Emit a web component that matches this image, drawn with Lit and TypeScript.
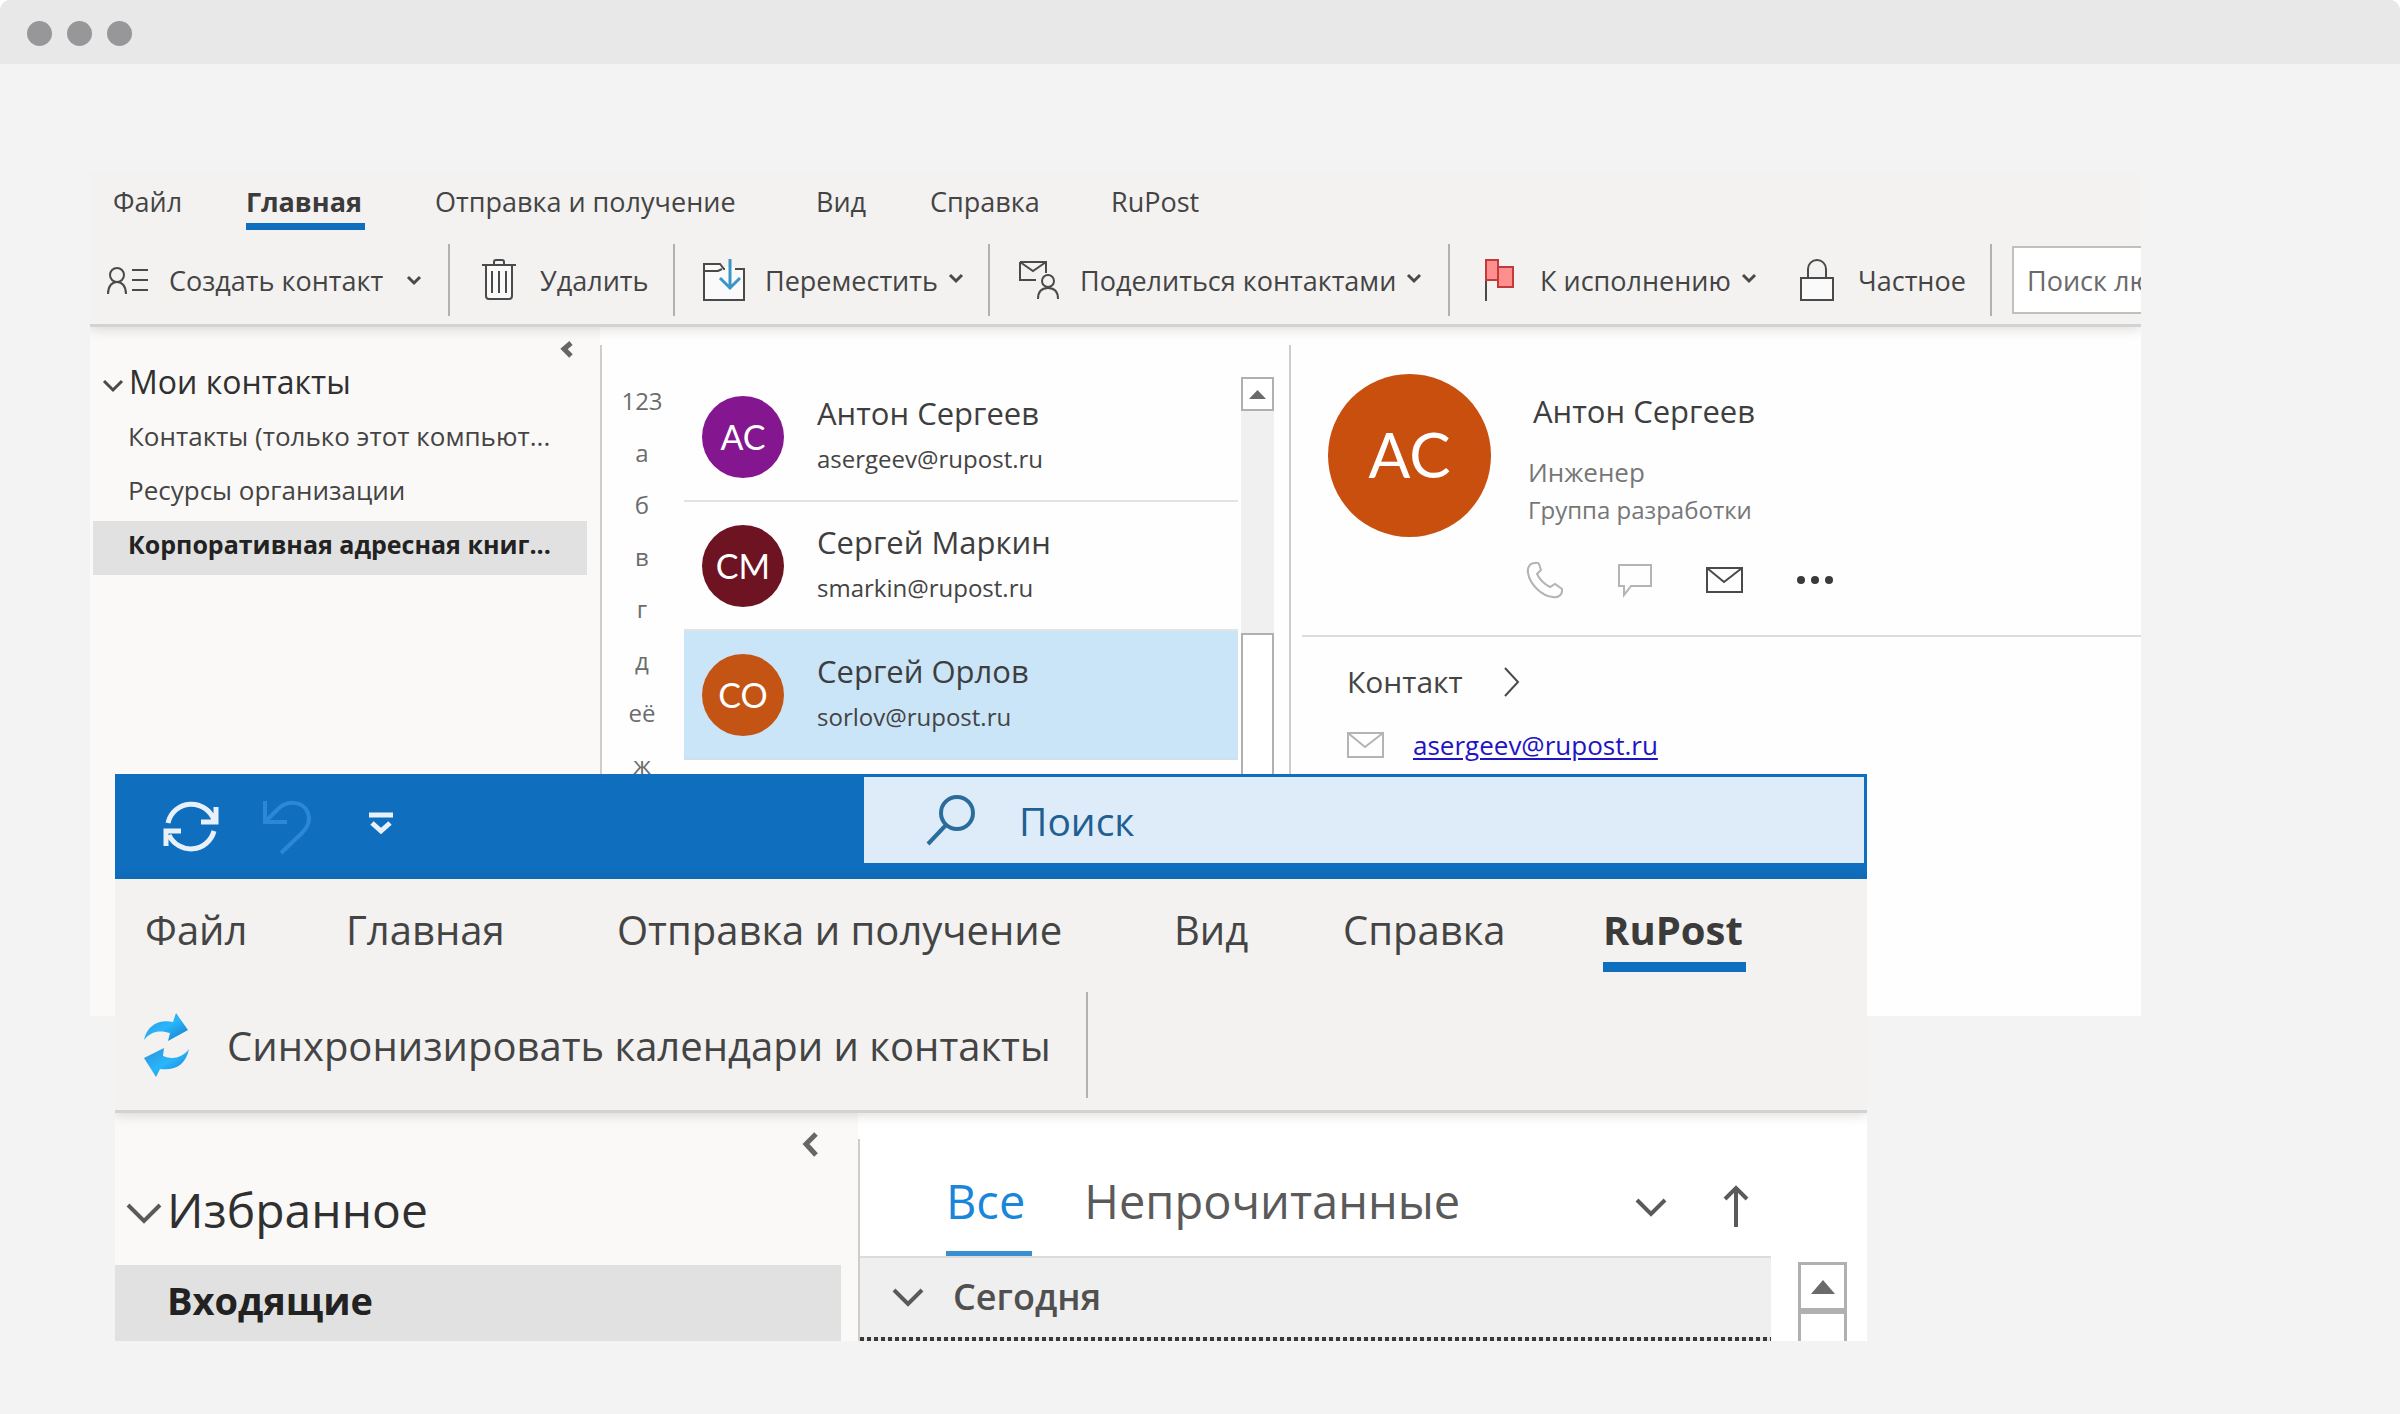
import { LitElement, html, css, svg, nothing } from "lit";
import type { TemplateResult } from "lit";
import { customElement, state } from "lit/decorators.js";
import { classMap } from "lit/directives/class-map.js";

interface Contact {
  initials: string;
  name: string;
  email: string;
  tone: string;
}

const TABS = ["Файл", "Главная", "Отправка и получение", "Вид", "Справка", "RuPost"];
const FOLDERS = [
  "Контакты (только этот компьют...",
  "Ресурсы организации",
  "Корпоративная адресная книг...",
];
const LETTERS = ["123", "а", "б", "в", "г", "д", "её", "ж"];
const CONTACTS: Contact[] = [
  { initials: "АС", name: "Антон Сергеев", email: "asergeev@rupost.ru", tone: "violet" },
  { initials: "СМ", name: "Сергей Маркин", email: "smarkin@rupost.ru", tone: "wine" },
  { initials: "СО", name: "Сергей Орлов", email: "sorlov@rupost.ru", tone: "orange" },
];

const icon = (w: number, h: number, body: unknown, cls = "") =>
  html`<svg class="icon ${cls}" width=${w} height=${h} viewBox="0 0 ${w} ${h}" aria-hidden="true">${body}</svg>`;

const envelope = svg`<path d="M1 1H36V25H1ZM1 1L18 15L36 1" />`;
const caret = icon(14, 9, svg`<path d="M1 1L7 7L13 1" />`, "caret");
const triangle = (w: number, h: number) =>
  icon(w, h, svg`<path class="solid" d="M0 ${h}L${w / 2} 0L${w} ${h}Z" />`);

const ICONS = {
  newContact: icon(42, 27, svg`<circle cx="10" cy="8" r="7" /><path d="M1 27C1 19 5 15 10 15S19 19 19 27M25 3H41M25 13H41M25 23H41" />`),
  trash: icon(34, 42, svg`<path class="paper" d="M4 6H30V37Q30 40 27 40H7Q4 40 4 37Z" /><path d="M0 6H34M12 6V3Q12 1 14 1H20Q22 1 22 3V6M10 12V34M17 12V34M24 12V34" />`),
  folder: icon(42, 42, svg`<path class="paper" d="M1 5H17L21 10H41V41H1Z" /><path d="M1 12H15L19 10" /><path class="gap" d="M22 10H32" /><path class="blue" d="M27 0V29M17 19L27 29L37 19" />`),
  share: icon(40, 40, svg`<path d="M1 2H27V13M1 2V20H17M1 2L14 11L27 2" /><circle cx="29" cy="21" r="6" /><path d="M19 39C19 31 23 28 29 28S39 31 39 39" />`),
  flag: icon(30, 42, svg`<path d="M2 2V42" /><path class="red" d="M14 8H29V28H14V21H2V1H14Z" /><path class="red" d="M14 8V21" />`),
  lock: icon(34, 42, svg`<path class="paper" d="M1 19H33V41H1Z" /><path d="M8 19V10A9 9 0 0 1 26 10V19" />`),
  phone: icon(38, 38, svg`<path d="M9 2C4 2 1 6 2 12C4 23 15 35 27 36C32 37 36 34 36 30V28L29 23L24 26C18 23 13 17 11 13L15 9L13 3Q12 1 9 2Z" />`, "pale"),
  chat: icon(34, 34, svg`<path d="M1 2H33V23H13L6 32V23H1Z" />`, "pale"),
  mail: icon(38, 27, envelope),
  mailPale: icon(38, 27, envelope, "pale"),
  dots: icon(36, 8, svg`<circle class="ink" cx="4" cy="4" r="4" /><circle class="ink" cx="18" cy="4" r="4" /><circle class="ink" cx="32" cy="4" r="4" />`),
  right: icon(18, 30, svg`<path d="M2 1L15 15L2 29" />`),
  fold: icon(12, 17, svg`<path class="thick" d="M10 2L3 8L10 15" />`),
  foldLarge: icon(18, 25, svg`<path class="thick" d="M15 2L5 12L15 23" />`),
  open: icon(20, 13, svg`<path class="bold" d="M1 2L10 11L19 2" />`),
  openLarge: icon(36, 22, svg`<path class="mid" d="M2 2L18 18L34 2" />`),
  openMid: icon(32, 20, svg`<path class="mid" d="M2 3L16 17L30 3" />`),
  up: icon(26, 42, svg`<path class="mid" d="M13 41V3M2 13L13 2L24 13" />`),
  sync: icon(54, 54, svg`<path d="M4 23A24 24 0 0 1 50 20M52 7V22H37M50 31A24 24 0 0 1 5 35M2 46V31H17" />`, "white"),
  undo: icon(48, 54, svg`<path d="M2 1V22H24M3 21L14 10C23 0 40 0 45 13C48 21 44 28 39 33L18 53" />`, "faded"),
  more: icon(24, 22, svg`<path d="M0 3H24M3 11L12 19L21 11" />`, "white"),
  search: icon(50, 52, svg`<circle cx="31" cy="19" r="16" /><path d="M20 31L2 50" />`, "navy"),
  refresh: icon(46, 64, svg`
    <defs><linearGradient id="sky" x1="0" y1="0" x2="1" y2="1"><stop offset="0" stop-color="#2b8fd8" /><stop offset=".5" stop-color="#29b6fb" /><stop offset="1" stop-color="#1478c8" /></linearGradient></defs>
    <path class="sky" d="M0 27C3 13 14 6 29 9L32 0L44 17L24 28L26 20C16 17 7 18 0 27Z" />
    <path class="sky" d="M45 36C42 51 32 58 16 56L12 64L0 45L20 35L19 43C28 47 38 45 45 36Z" />`),
};

const base = css`
  :host { display: block; font-family: "Open Sans", "Noto Sans", sans-serif; color: #444; }
  *, *::before, *::after { box-sizing: border-box; }
  button, input { font: inherit; color: inherit; background: none; border: 0; padding: 0; margin: 0; }
  button { display: flex; align-items: center; white-space: nowrap; text-align: left; cursor: pointer; }
  h1, h2, h3, p, ul { margin: 0; padding: 0; font-weight: 400; list-style: none; }
  .icon { display: block; flex: none; overflow: visible; fill: none; stroke: #4a4a4a; stroke-width: 2; }
  .icon .paper { fill: #fafafa; }
  .icon .solid { fill: #6a6a6a; stroke: none; }
  .icon .ink { fill: #3a3a3a; stroke: none; }
  .icon .gap { stroke: #fafafa; stroke-width: 4; }
  .icon .blue { stroke: #3a96c8; stroke-width: 3; }
  .icon .red { fill: #ff8f8f; stroke: #c23b3b; }
  .icon .sky { fill: url(#sky); stroke: none; }
  .icon .bold { stroke-width: 3; }
  .icon .thick { stroke: #666; stroke-width: 5; }
  .icon .mid { stroke-width: 4; stroke: #5a5a5a; }
  .icon.caret { stroke-width: 3; }
  .icon.pale { stroke: #b4b4b4; }
  .icon.white { stroke: #e8f1fa; stroke-width: 5; }
  .icon.faded { stroke: #2b88d8; stroke-width: 4; }
  .icon.navy { stroke: #2a6c9c; stroke-width: 4; }
  .ribbon { position: relative; z-index: 1; background: #f3f2f0; border-bottom: 3px solid #d4d2d0; box-shadow: 0 2px 12px rgba(0, 0, 0, 0.14); }
  .tabs { display: grid; justify-items: start; }
  .tab { border-bottom: solid transparent; }
  .tab.active { font-weight: 700; border-color: #106ebe; color: #3b3b3b; padding-right: 3px; }
  .rule { align-self: stretch; width: 2px; background: #b3b1af; }
  .scroll { display: flex; flex-direction: column; background: #f0f0f0; }
  .scroll-up { justify-content: center; border: 2px solid #b0b0b0; background: #fff; }
  .thumb { flex: 1; border: 2px solid #b0b0b0; border-bottom: 0; background: #fff; }
`;

@customElement("contacts-window")
class ContactsWindow extends LitElement {
  @state() private selected = 2;

  static styles = [base, css`
    .window { overflow: hidden; background: #fefefe; font-size: 27px; }
    .tabs { grid-template-columns: 133px 189px 381px 114px 181px auto; padding: 11px 0 0 23px; }
    .tab { line-height: 38px; padding-bottom: 2px; border-bottom-width: 7px; }
    .tools { display: grid; grid-template-columns: 360px 225px 315px 460px 318px 224px 1fr; height: 94px; padding: 14px 0 8px; }
    .tool { display: flex; align-items: stretch; justify-content: space-between; }
    .tool button { gap: 20px; padding-left: 28px; }
    .tool:first-child button { padding-left: 17px; }
    .slot { display: flex; justify-content: center; width: 42px; }
    .tool .caret { margin-left: -9px; margin-bottom: 4px; }
    .tool:first-child .caret { margin-left: 4px; margin-bottom: 0; }
    .find { margin: 2px 0 2px 20px; width: 320px; border: 2px solid #c2c0be; background: #fff; padding-left: 13px; }
    .find::placeholder { color: #6a6a6a; opacity: 1; }
    .body { display: grid; grid-template-columns: 510px 689px 1fr; min-height: 689px; }
    .side { background: #faf9f8; padding-top: 14px; }
    .collapse { margin-left: 471px; height: 17px; margin-bottom: 2px; }
    .side h2 { display: flex; align-items: center; gap: 6px; padding-left: 13px; font-size: 32px; line-height: 44px; color: #303030; margin-bottom: 9px; }
    .side h2 .icon { margin-top: 6px; }
    .folder { width: 494px; height: 54px; margin-left: 3px; padding: 0 0 8px 35px; font-size: 26px; line-height: 46px; }
    .folder.active { background: #e1e1e1; font-weight: 700; font-size: 25px; color: #222; }
    .people { display: grid; grid-template-columns: 82px 1fr 33px; margin-top: 18px; border-left: 2px solid #cfcdcb; padding-right: 15px; }
    .index { padding-top: 30px; }
    .index button { width: 80px; justify-content: center; font-size: 24px; line-height: 52px; color: #6c6c6c; }
    .cards { padding-top: 28px; margin-right: 3px; }
    .card { width: 100%; height: 129px; gap: 33px; padding-left: 18px; border-bottom: 2px solid #e3e3e3; }
    .card.active { background: #cae4f8; border-color: #d0dfec; }
    .avatar { display: grid; place-items: center; flex: none; width: 82px; height: 82px; border-radius: 50%; color: #fff; font: 34px/1 Lato, sans-serif; }
    .violet { background: #84168f; }
    .wine { background: #6d1322; }
    .orange { background: #c45414; }
    .name { display: block; font-size: 31px; line-height: 44px; color: #3e3e3e; }
    .email { display: block; font-size: 24px; line-height: 47px; color: #444; }
    .scroll { margin-top: 32px; }
    .scroll-up { height: 34px; }
    .thumb { margin-top: 222px; }
    .detail { margin-top: 18px; border-left: 2px solid #cfcdcb; }
    .head { display: flex; gap: 34px; padding: 29px 0 0 37px; }
    .avatar.big { width: 163px; height: 163px; padding-bottom: 4px; font-size: 62px; background: #c94f0f; }
    .who { padding-top: 15px; }
    .who .name { padding-left: 8px; margin-bottom: 20px; }
    .who p { padding-left: 3px; line-height: 38px; color: #777; font-size: 24px; }
    .who p.role { font-size: 26px; }
    .actions { display: flex; gap: 50px; margin-top: 31px; }
    .actions button { width: 40px; height: 40px; justify-content: center; }
    .section { margin: 35px 0 0 11px; border-top: 2px solid #dcdcdc; padding: 23px 0 0 45px; }
    .section h3 { display: flex; align-items: center; gap: 40px; font-size: 30px; line-height: 44px; }
    .mailto { display: flex; align-items: center; gap: 28px; margin-top: 21px; font-size: 26px; line-height: 40px; }
    .mailto a { color: #1f14c4; text-underline-offset: 3px; text-decoration-thickness: 2px; }
  `];

  private tool(glyph: TemplateResult, label: string, menu: boolean, ruled = true) {
    return html`<div class="tool">
      <button type="button"><span class="slot">${glyph}</span>${label}${menu ? caret : nothing}</button>
      ${ruled ? html`<span class="rule"></span>` : nothing}
    </div>`;
  }

  render() {
    return html`<section class="window">
      <header class="ribbon">
        <nav class="tabs">
          ${TABS.map((t, i) => html`<button type="button" class=${classMap({ tab: true, active: i === 1 })}>${t}</button>`)}
        </nav>
        <div class="tools">
          ${this.tool(ICONS.newContact, "Создать контакт", true)}
          ${this.tool(ICONS.trash, "Удалить", false)}
          ${this.tool(ICONS.folder, "Переместить", true)}
          ${this.tool(ICONS.share, "Поделиться контактами", true)}
          ${this.tool(ICONS.flag, "К исполнению", true, false)}
          ${this.tool(ICONS.lock, "Частное", false)}
          <input class="find" type="text" placeholder="Поиск людей" aria-label="Поиск людей" />
        </div>
      </header>
      <div class="body">
        <aside class="side">
          <button type="button" class="collapse" aria-label="Свернуть">${ICONS.fold}</button>
          <h2>${ICONS.open}Мои контакты</h2>
          ${FOLDERS.map((f, i) => html`<button type="button" class=${classMap({ folder: true, active: i === 2 })}>${f}</button>`)}
        </aside>
        <div class="people">
          <nav class="index">${LETTERS.map((l) => html`<button type="button">${l}</button>`)}</nav>
          <ul class="cards">
            ${CONTACTS.map((c, i) => html`<li>
              <button type="button" class=${classMap({ card: true, active: i === this.selected })} @click=${() => (this.selected = i)}>
                <span class="avatar ${c.tone}">${c.initials}</span>
                <span><span class="name">${c.name}</span><span class="email">${c.email}</span></span>
              </button>
            </li>`)}
          </ul>
          <div class="scroll">
            <button type="button" class="scroll-up" aria-label="Вверх">${triangle(17, 9)}</button>
            <span class="thumb"></span>
          </div>
        </div>
        <article class="detail">
          <div class="head">
            <span class="avatar big">АС</span>
            <div class="who">
              <h2 class="name">Антон Сергеев</h2>
              <p class="role">Инженер</p>
              <p>Группа разработки</p>
              <div class="actions">
                <button type="button" aria-label="Позвонить">${ICONS.phone}</button>
                <button type="button" aria-label="Чат">${ICONS.chat}</button>
                <button type="button" aria-label="Написать">${ICONS.mail}</button>
                <button type="button" aria-label="Ещё">${ICONS.dots}</button>
              </div>
            </div>
          </div>
          <div class="section">
            <h3>Контакт ${ICONS.right}</h3>
            <p class="mailto">${ICONS.mailPale}<a href="mailto:asergeev@rupost.ru">asergeev@rupost.ru</a></p>
          </div>
        </article>
      </div>
    </section>`;
  }
}

@customElement("mail-window")
class MailWindow extends LitElement {
  static styles = [base, css`
    .window { overflow: hidden; background: #fff; font-size: 40px; }
    .title { display: grid; grid-template-columns: 749px 1fr; height: 105px; background: #106ebe; padding: 3px 3px 16px 0; }
    .quick { display: flex; align-items: center; padding: 13px 0 0 49px; }
    .quick button + button { margin-left: 45px; }
    .quick button:last-child { margin-left: 58px; padding-bottom: 8px; }
    .search { display: flex; align-items: center; gap: 43px; padding-left: 62px; background: #deecf9; color: #1f5f92; }
    .search input { flex: 1; min-width: 0; height: 100%; font-size: 39px; }
    .search input::placeholder { color: #1f5f92; opacity: 1; }
    .tabs { grid-template-columns: 201px 271px 557px 169px 260px auto; padding: 23px 0 0 30px; }
    .tab { line-height: 56px; padding-bottom: 4px; border-bottom-width: 10px; }
    .tools { display: flex; justify-content: flex-start; gap: 35px; height: 138px; padding: 20px 0 12px 29px; }
    .tools button { gap: 37px; }
    .body { display: grid; grid-template-columns: 743px 1fr; }
    .side { background: #faf9f8; padding-top: 19px; }
    .collapse { margin-left: 686px; height: 25px; }
    .side h2 { display: flex; align-items: center; gap: 5px; padding: 21px 0 23px 11px; font-size: 48px; line-height: 64px; color: #303030; }
    .side h2 .icon { margin-top: 8px; }
    .inbox { width: 726px; height: 76px; padding: 0 0 5px 52px; background: #e1e1e1; font-size: 38px; line-height: 71px; font-weight: 700; color: #222; }
    .main { display: grid; grid-template-columns: 1fr 49px; gap: 27px; margin-top: 26px; padding-right: 20px; border-left: 2px solid #cfcdcb; }
    .filter { display: flex; align-items: center; height: 119px; padding: 30px 22px 0 86px; border-bottom: 2px solid #dcdcdc; font-size: 47px; }
    .filter button { flex: none; }
    .view { align-self: stretch; line-height: 64px; padding: 0 7px 18px 0; border-bottom: 5px solid transparent; color: #5a5a5a; }
    .view.active { color: #1a86d9; border-color: #3a8fd0; }
    .view + .view { margin-left: 52px; }
    .sort { display: flex; align-items: center; gap: 56px; margin-left: auto; padding-bottom: 12px; }
    .group { width: 100%; height: 79px; gap: 29px; padding: 0 0 2px 32px; background: #efefef; font-size: 36px; font-weight: 600; color: #505050; }
    .dots { height: 4px; background: repeating-linear-gradient(90deg, #3c3836 0 4px, #e6e6e6 4px 7px); }
    .scroll { margin-top: 123px; background: #fff; }
    .scroll-up { height: 49px; border-width: 3px; }
    .thumb { border-width: 3px; }
  `];

  render() {
    return html`<section class="window">
      <header>
        <div class="title">
          <div class="quick">
            <button type="button" aria-label="Отправить и получить">${ICONS.sync}</button>
            <button type="button" aria-label="Отменить">${ICONS.undo}</button>
            <button type="button" aria-label="Настройка панели">${ICONS.more}</button>
          </div>
          <label class="search">${ICONS.search}<input type="text" placeholder="Поиск" aria-label="Поиск" /></label>
        </div>
      </header>
      <div class="ribbon">
        <nav class="tabs">
          ${TABS.map((t, i) => html`<button type="button" class=${classMap({ tab: true, active: i === 5 })}>${t}</button>`)}
        </nav>
        <div class="tools">
          <button type="button">${ICONS.refresh}Синхронизировать календари и контакты</button>
          <span class="rule"></span>
        </div>
      </div>
      <div class="body">
        <aside class="side">
          <button type="button" class="collapse" aria-label="Свернуть">${ICONS.foldLarge}</button>
          <h2>${ICONS.openLarge}Избранное</h2>
          <button type="button" class="inbox">Входящие</button>
        </aside>
        <div class="main">
          <div>
            <div class="filter">
              <button type="button" class="view active">Все</button>
              <button type="button" class="view">Непрочитанные</button>
              <div class="sort">
                <button type="button" aria-label="Фильтр">${ICONS.openMid}</button>
                <button type="button" aria-label="Порядок">${ICONS.up}</button>
              </div>
            </div>
            <button type="button" class="group">${ICONS.openMid}Сегодня</button>
            <div class="dots"></div>
          </div>
          <div class="scroll">
            <button type="button" class="scroll-up" aria-label="Вверх">${triangle(24, 14)}</button>
            <span class="thumb"></span>
          </div>
        </div>
      </div>
    </section>`;
  }
}

@customElement("app-root")
class AppRoot extends LitElement {
  static styles = css`
    :host { display: block; background: #fff; }
    .frame { min-height: 100vh; border-radius: 10px 10px 0 0; overflow: hidden; background: #f3f3f3; }
    .bar { box-sizing: border-box; display: flex; align-items: center; gap: 15px; height: 64px; padding: 3px 27px 0; background: #e8e8e8; }
    .dot { width: 25px; height: 25px; border-radius: 50%; background: #979799; }
    .desk { position: relative; padding: 108px 259px 0 90px; }
    mail-window { position: absolute; z-index: 2; top: 710px; left: 115px; right: 533px; }
  `;

  render() {
    return html`<main class="frame">
      <div class="bar"><span class="dot"></span><span class="dot"></span><span class="dot"></span></div>
      <div class="desk">
        <contacts-window></contacts-window>
        <mail-window></mail-window>
      </div>
    </main>`;
  }
}
